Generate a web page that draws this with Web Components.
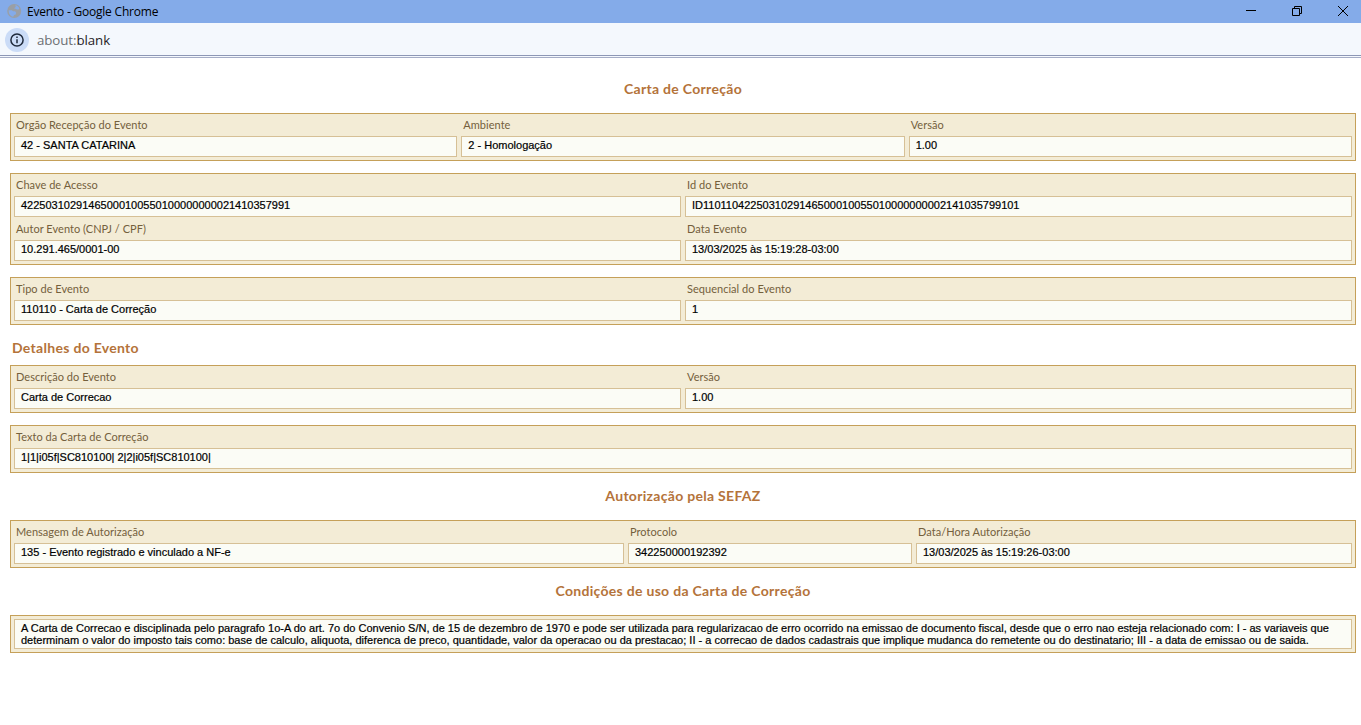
<!DOCTYPE html>
<html lang="pt-BR">
<head>
<meta charset="utf-8">
<title>Evento</title>
<style>
    body {
        margin: 0;
        background: #fff;
        font-family: "Liberation Sans", Arial, sans-serif;
        overflow: hidden;
    }
</style>
</head>
<body>

<window-bar>Evento - Google Chrome</window-bar>
<address-bar scheme="about:">blank</address-bar>

<evento-page>
    <section-title class="main">Carta de Correção</section-title>
    <field-panel columns="1fr 1fr 1fr">
        <field-box label="Orgão Recepção do Evento">42 - SANTA CATARINA</field-box>
        <field-box label="Ambiente">2 - Homologação</field-box>
        <field-box label="Versão">1.00</field-box>
    </field-panel>
    <field-panel columns="1fr 1fr">
        <field-box label="Chave de Acesso">42250310291465000100550100000000021410357991</field-box>
        <field-box label="Id do Evento">ID1101104225031029146500010055010000000002141035799101</field-box>
        <field-box label="Autor Evento (CNPJ / CPF)">10.291.465/0001-00</field-box>
        <field-box label="Data Evento">13/03/2025 às 15:19:28-03:00</field-box>
    </field-panel>
    <field-panel columns="1fr 1fr">
        <field-box label="Tipo de Evento">110110 - Carta de Correção</field-box>
        <field-box label="Sequencial do Evento">1</field-box>
    </field-panel>

    <section-title align="left">Detalhes do Evento</section-title>
    <field-panel columns="1fr 1fr">
        <field-box label="Descrição do Evento">Carta de Correcao</field-box>
        <field-box label="Versão">1.00</field-box>
    </field-panel>
    <field-panel columns="1fr">
        <field-box label="Texto da Carta de Correção">1|1|i05f|SC810100| 2|2|i05f|SC810100|</field-box>
    </field-panel>

    <section-title>Autorização pela SEFAZ</section-title>
    <field-panel columns="610fr 284fr 436fr">
        <field-box label="Mensagem de Autorização">135 - Evento registrado e vinculado a NF-e</field-box>
        <field-box label="Protocolo">342250000192392</field-box>
        <field-box label="Data/Hora Autorização">13/03/2025 às 15:19:26-03:00</field-box>
    </field-panel>

    <section-title>Condições de uso da Carta de Correção</section-title>
    <field-panel columns="1fr">
        <field-box>A Carta de Correcao e disciplinada pelo paragrafo 1o-A do art. 7o do Convenio S/N, de 15 de dezembro de 1970 e pode ser utilizada para regularizacao de erro ocorrido na emissao de documento fiscal, desde que o erro nao esteja relacionado com: I - as variaveis que determinam o valor do imposto tais como: base de calculo, aliquota, diferenca de preco, quantidade, valor da operacao ou da prestacao; II - a correcao de dados cadastrais que implique mudanca do remetente ou do destinatario; III - a data de emissao ou de saida.</field-box>
    </field-panel>
</evento-page>

<script>
class WindowBar extends HTMLElement {

    constructor() {
        super()
        this.shadowDOM = this.attachShadow({mode: "open"})
    }

    connectedCallback() {
        this.shadowDOM.innerHTML = `
            <style>
                :host {
                    display: flex;
                    align-items: center;
                    box-sizing: border-box;
                    height: 23px;
                    padding-left: 7px;
                    background: #84abe9;
                    color: #000;
                    font: 12px/23px "Open Sans", sans-serif;
                    letter-spacing: -0.21px;
                }

                svg {
                    display: block;
                }

                .title {
                    flex: 1;
                    padding-left: 5px;
                }

                .controls {
                    display: flex;
                }

                .controls svg {
                    width: 46px;
                    height: 23px;
                    fill: none;
                    stroke: #000;
                }

                .controls svg:last-child {
                    width: 41px;
                }
            </style>

            <svg width="15" height="23" viewBox="0 0 15 23">
                <circle cx="7.2" cy="11" r="7" fill="#9a9fa6"/>
                <path d="M8.3 5.3c1.8.2 3.4 1.4 4 3.1l-.6 1.2H9.8l-1-.9H7.4l.2-1 1.2-.7zM1.7 10.3h3l1.4 1h2l1.1 1.5-.5 1.7-1.6.4-.9 1.9c-2.500-.5-4.400-2.600-4.500-5.300z" fill="#84abe9"/>
            </svg>
            <div class="title"><slot></slot></div>
            <div class="controls">
                <svg viewBox="0 0 46 23"><path d="M18 10.5h10"/></svg>
                <svg viewBox="0 0 46 23"><path d="M18.5 8.5h7v7h-7zM20.5 8.5v-2h7v7h-2"/></svg>
                <svg viewBox="0 0 41 23"><path d="M18 6l10 10M28 6L18 16"/></svg>
            </div>
        `;
    }

}

class AddressBar extends HTMLElement {

    constructor() {
        super()
        this.shadowDOM = this.attachShadow({mode: "open"})
    }

    connectedCallback() {
        this.shadowDOM.innerHTML = `
            <style>
                :host {
                    display: flex;
                    align-items: center;
                    box-sizing: border-box;
                    height: 35px;
                    padding: 0 0 1px 5px;
                    background: linear-gradient(#8d97b5 0 1px, #f4f8fd 1px 2px, #a5adc6 2px 3px) 0 100% / 100% 3px no-repeat #f4f8fd;
                    color: #1f2125;
                    font: 13.3px/33px "Open Sans", sans-serif;
                    letter-spacing: -0.08px;
                }

                svg {
                    display: block;
                    margin-right: 8px;
                }

                .scheme {
                    color: #6c6f73;
                }
            </style>

            <svg width="24" height="34" viewBox="0 0 24 34">
                <circle cx="12" cy="17" r="12" fill="#cbdcf7"/>
                <circle cx="12" cy="17" r="6.1" fill="none" stroke="#1f2a3c" stroke-width="1.5"/>
                <path d="M12 16.2v4M12 13.5v1.5" stroke="#1f2a3c" stroke-width="1.5"/>
            </svg>
            <span class="scheme">${this.getAttribute("scheme")}</span><slot></slot>
        `;
    }

}

class EventoPage extends HTMLElement {

    constructor() {
        super()
        this.shadowDOM = this.attachShadow({mode: "open"})
    }

    connectedCallback() {
        this.shadowDOM.innerHTML = `
            <style>
                :host {
                    display: flex;
                    flex-direction: column;
                    padding: 15px 5px 0 10px;
                }

                ::slotted(section-title.main) {
                    height: 40px;
                    line-height: 32px;
                }
            </style>
            <slot></slot>
        `;
    }

}

class SectionTitle extends HTMLElement {

    constructor() {
        super()
        this.shadowDOM = this.attachShadow({mode: "open"})
    }

    connectedCallback() {
        const left = this.getAttribute("align") === "left";

        this.shadowDOM.innerHTML = `
            <style>
                :host {
                    display: block;
                    box-sizing: border-box;
                    height: ${left ? 28 : 35}px;
                    padding: 0 2px;
                    color: #b4733a;
                    font: bold 14px/22px Lato, sans-serif;
                    letter-spacing: 0.3px;
                    text-align: ${left ? "left" : "center"};
                }
            </style>
            <slot></slot>
        `;
    }

}

class FieldPanel extends HTMLElement {

    constructor() {
        super()
        this.shadowDOM = this.attachShadow({mode: "open"})
    }

    connectedCallback() {
        this.shadowDOM.innerHTML = `
            <style>
                :host {
                    display: grid;
                    grid-template-columns: ${this.getAttribute("columns")};
                    gap: 1px 4px;
                    margin-bottom: 12px;
                    padding: 0 3px 3px;
                    border: 1px solid #c5a059;
                    background: #f3ecd6;
                }
            </style>
            <slot></slot>
        `;
    }

}

class FieldBox extends HTMLElement {

    constructor() {
        super()
        this.shadowDOM = this.attachShadow({mode: "open"})
    }

    connectedCallback() {
        const label = this.getAttribute("label");

        this.shadowDOM.innerHTML = `
            <style>
                :host {
                    display: block;
                    min-width: 0;
                    padding-top: ${label ? 0 : 3}px;
                }

                .label {
                    height: 22px;
                    padding-left: 2px;
                    color: #74603c;
                    font: 11px/22px Lato, sans-serif;
                    letter-spacing: 0.03px;
                }

                .value {
                    box-sizing: border-box;
                    min-height: 21px;
                    padding: 2px 6px;
                    border: 1px solid #d6c096;
                    background: #fbfcf6;
                    color: #000;
                    font-size: 11px;
                    line-height: 12px;
                    -webkit-text-stroke: 0.2px #000;
                }
            </style>

            ${label ? `<div class="label">${label}</div>` : ""}
            <div class="value"><slot></slot></div>
        `;
    }

}

customElements.define('window-bar', WindowBar);
customElements.define('address-bar', AddressBar);
customElements.define('evento-page', EventoPage);
customElements.define('section-title', SectionTitle);
customElements.define('field-panel', FieldPanel);
customElements.define('field-box', FieldBox);
</script>
</body>
</html>
